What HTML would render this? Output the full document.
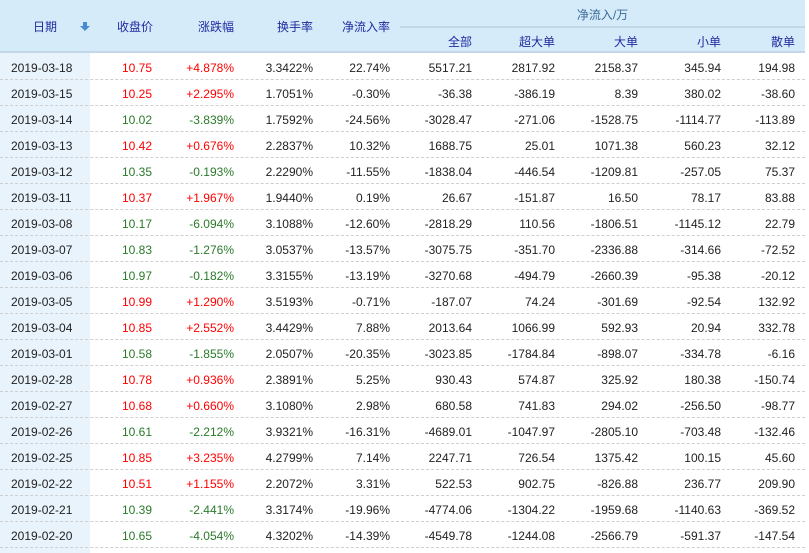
<!DOCTYPE html>
<html><head><meta charset="utf-8"><style>
body{margin:0;background:#fff;font-family:"Liberation Sans","Noto Sans CJK SC",sans-serif;font-size:12px;width:809px;height:553px;overflow:hidden;position:relative}
.hd{position:absolute;left:0;top:0;width:805px;height:53px;background:#d6ebfa;border-bottom:2px solid #c3d7e8;box-sizing:border-box}
.hl{position:absolute;top:26px;left:400px;width:405px;height:2px;background:#c3d7e8}
.h{position:absolute;color:#1f2ba0;text-align:right;line-height:14px}
.grp{position:absolute;left:400px;width:405px;top:6px;text-align:center;color:#3a6a98}
.datebg{position:absolute;left:0;top:53px;width:90px;height:500px;background:#e8f3fc}
.row{position:absolute;left:0;width:805px;height:26px;border-bottom:1px dashed #cfcfcf;box-sizing:border-box}
.c{position:absolute;top:7px;line-height:14px;text-align:right;color:#222}
.r{color:#f00}.g{color:#2a7a2a}
</style></head><body>
<div class="hd"></div><div class="hl"></div><div class="datebg"></div>
<div class="grp">净流入/万</div>
<div class="h" style="left:33px;top:20px">日期</div>
<svg style="position:absolute;left:80px;top:22px" width="10" height="10"><rect x="3" y="0" width="4" height="5" fill="#4a8ad0"/><polygon points="0,4 10,4 5,9" fill="#4a8ad0"/></svg>
<div class="h" style="right:656px;top:20px">收盘价</div>
<div class="h" style="right:575px;top:20px">涨跌幅</div>
<div class="h" style="right:496px;top:20px">换手率</div>
<div class="h" style="right:419px;top:20px">净流入率</div>
<div class="h" style="right:337px;top:35px">全部</div>
<div class="h" style="right:254px;top:35px">超大单</div>
<div class="h" style="right:171px;top:35px">大单</div>
<div class="h" style="right:88px;top:35px">小单</div>
<div class="h" style="right:14px;top:35px">散单</div>
<div id="rows"></div>
<script>
var d=[["2019-03-18","10.75","+4.878%","3.3422%","22.74%","5517.21","2817.92","2158.37","345.94","194.98"],
["2019-03-15","10.25","+2.295%","1.7051%","-0.30%","-36.38","-386.19","8.39","380.02","-38.60"],
["2019-03-14","10.02","-3.839%","1.7592%","-24.56%","-3028.47","-271.06","-1528.75","-1114.77","-113.89"],
["2019-03-13","10.42","+0.676%","2.2837%","10.32%","1688.75","25.01","1071.38","560.23","32.12"],
["2019-03-12","10.35","-0.193%","2.2290%","-11.55%","-1838.04","-446.54","-1209.81","-257.05","75.37"],
["2019-03-11","10.37","+1.967%","1.9440%","0.19%","26.67","-151.87","16.50","78.17","83.88"],
["2019-03-08","10.17","-6.094%","3.1088%","-12.60%","-2818.29","110.56","-1806.51","-1145.12","22.79"],
["2019-03-07","10.83","-1.276%","3.0537%","-13.57%","-3075.75","-351.70","-2336.88","-314.66","-72.52"],
["2019-03-06","10.97","-0.182%","3.3155%","-13.19%","-3270.68","-494.79","-2660.39","-95.38","-20.12"],
["2019-03-05","10.99","+1.290%","3.5193%","-0.71%","-187.07","74.24","-301.69","-92.54","132.92"],
["2019-03-04","10.85","+2.552%","3.4429%","7.88%","2013.64","1066.99","592.93","20.94","332.78"],
["2019-03-01","10.58","-1.855%","2.0507%","-20.35%","-3023.85","-1784.84","-898.07","-334.78","-6.16"],
["2019-02-28","10.78","+0.936%","2.3891%","5.25%","930.43","574.87","325.92","180.38","-150.74"],
["2019-02-27","10.68","+0.660%","3.1080%","2.98%","680.58","741.83","294.02","-256.50","-98.77"],
["2019-02-26","10.61","-2.212%","3.9321%","-16.31%","-4689.01","-1047.97","-2805.10","-703.48","-132.46"],
["2019-02-25","10.85","+3.235%","4.2799%","7.14%","2247.71","726.54","1375.42","100.15","45.60"],
["2019-02-22","10.51","+1.155%","2.2072%","3.31%","522.53","902.75","-826.88","236.77","209.90"],
["2019-02-21","10.39","-2.441%","3.3174%","-19.96%","-4774.06","-1304.22","-1959.68","-1140.63","-369.52"],
["2019-02-20","10.65","-4.054%","4.3202%","-14.39%","-4549.78","-1244.08","-2566.79","-591.37","-147.54"]];
var R=[0,657,575,496,419,337,254,171,88,14],h="";
d.forEach(function(r,i){var cl=r[2][0]=="+"?"r":"g";h+='<div class="row" style="top:'+(54+i*26)+'px"><div class="c" style="left:11px">'+r[0]+'</div>';
for(var j=1;j<10;j++){h+='<div class="c '+(j<3?cl:"")+'" style="right:'+(R[j]-4)+'px">'+r[j]+'</div>';}h+='</div>';});
document.getElementById("rows").innerHTML=h;
</script>
</body></html>
